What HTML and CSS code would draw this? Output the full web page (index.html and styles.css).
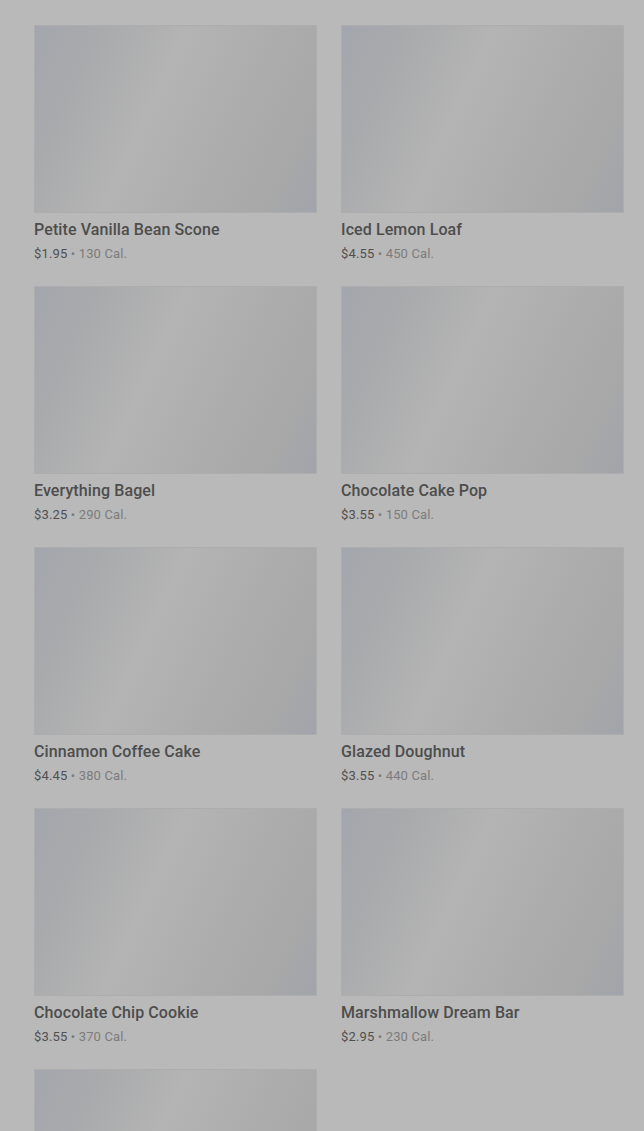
FILE: index.html
```html
<!DOCTYPE html>
<html lang="en">
<head>
  <meta charset="UTF-8" />
  <meta name="viewport" content="width=device-width, initial-scale=1" />
  <title>Bakery</title>
  <link rel="stylesheet" href="styles.css">
</head>
<body>

  <div class="menu-grid">
    <div class="item">
      <div class="thumb"></div>
      <div class="name">Butter Croissant</div>
      <div class="meta"><span class="price">$3.45</span> &bull; 260 Cal.</div>
    </div>
    <div class="item">
      <div class="thumb"></div>
      <div class="name">Banana Nut Bread</div>
      <div class="meta"><span class="price">$3.95</span> &bull; 420 Cal.</div>
    </div>

    <div class="item">
      <div class="thumb"></div>
      <div class="name">Petite Vanilla Bean Scone</div>
      <div class="meta"><span class="price">$1.95</span> &bull; 130 Cal.</div>
    </div>
    <div class="item">
      <div class="thumb"></div>
      <div class="name">Iced Lemon Loaf</div>
      <div class="meta"><span class="price">$4.55</span> &bull; 450 Cal.</div>
    </div>

    <div class="item">
      <div class="thumb"></div>
      <div class="name">Everything Bagel</div>
      <div class="meta"><span class="price">$3.25</span> &bull; 290 Cal.</div>
    </div>
    <div class="item">
      <div class="thumb"></div>
      <div class="name">Chocolate Cake Pop</div>
      <div class="meta"><span class="price">$3.55</span> &bull; 150 Cal.</div>
    </div>

    <div class="item">
      <div class="thumb"></div>
      <div class="name">Cinnamon Coffee Cake</div>
      <div class="meta"><span class="price">$4.45</span> &bull; 380 Cal.</div>
    </div>
    <div class="item">
      <div class="thumb"></div>
      <div class="name">Glazed Doughnut</div>
      <div class="meta"><span class="price">$3.55</span> &bull; 440 Cal.</div>
    </div>

    <div class="item">
      <div class="thumb"></div>
      <div class="name">Chocolate Chip Cookie</div>
      <div class="meta"><span class="price">$3.55</span> &bull; 370 Cal.</div>
    </div>
    <div class="item">
      <div class="thumb"></div>
      <div class="name">Marshmallow Dream Bar</div>
      <div class="meta"><span class="price">$2.95</span> &bull; 230 Cal.</div>
    </div>

    <div class="item">
      <div class="thumb"></div>
      <div class="name">Blueberry Muffin</div>
      <div class="meta"><span class="price">$3.25</span> &bull; 360 Cal.</div>
    </div>
  </div>

</body>
</html>
```

FILE: styles.css
```css
body {
  margin: 0;
  background: #b9b9b9;
  font-family: Roboto, 'Liberation Sans', sans-serif;
  overflow: hidden;
}

/* page is scrolled: first row sits mostly above the fold */
.menu-grid {
  display: grid;
  grid-template-columns: 283px 283px;
  column-gap: 24px;
  row-gap: 24px;
  padding-left: 34px;
  margin-top: -236px;
}

.thumb {
  height: 186px;
  border: 1px solid #adadad;
  background: linear-gradient(115deg, #a3a6ad 0%, #a9aaac 18%, #b4b4b4 42%, #acacac 68%, #a8a8a8 86%, #a1a4ab 100%);
}

.name {
  margin-top: 7px;
  font-size: 16px;
  line-height: 20px;
  font-weight: 500;
  letter-spacing: 0.1px;
  color: #4d4d4d;
}

.meta {
  margin-top: 5px;
  font-size: 13px;
  line-height: 17px;
  letter-spacing: 0.15px;
  color: #7c7c7c;
}

.price {
  color: #505050;
}
```
